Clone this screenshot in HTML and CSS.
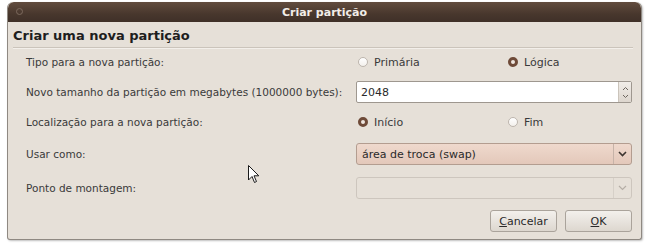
FILE: index.html
```html
<!DOCTYPE html>
<html lang="pt">
<head>
    <meta charset="UTF-8">
    <title>Criar partição</title>
    <link rel="stylesheet" href="styles.css">
</head>
<body>
    <div class="window">
        <div class="titlebar">
            <span class="close-dot"></span>
            <span class="title">Criar partição</span>
        </div>
        <div class="content">
            <h1>Criar uma nova partição</h1>

            <div class="row">
                <div class="label">Tipo para a nova partição:</div>
                <div class="radios">
                    <label class="radio"><span class="dot"></span>Primária</label>
                    <label class="radio"><span class="dot checked"></span>Lógica</label>
                </div>
            </div>

            <div class="row">
                <div class="label">Novo tamanho da partição em megabytes (1000000 bytes):</div>
                <div class="spin">
                    <span class="spin-value">2048</span>
                    <span class="spin-buttons">
                        <svg width="7" height="5" viewBox="0 0 7 5"><path d="M1 4 L3.5 1.5 L6 4" fill="none" stroke="#6d665f" stroke-width="1"/></svg>
                        <svg width="7" height="5" viewBox="0 0 7 5"><path d="M1 1 L3.5 3.5 L6 1" fill="none" stroke="#6d665f" stroke-width="1"/></svg>
                    </span>
                </div>
            </div>

            <div class="row">
                <div class="label">Localização para a nova partição:</div>
                <div class="radios">
                    <label class="radio"><span class="dot checked"></span>Início</label>
                    <label class="radio"><span class="dot"></span>Fim</label>
                </div>
            </div>

            <div class="row usage">
                <div class="label">Usar como:</div>
                <div class="combo active">
                    <span class="combo-value">área de troca (swap)</span>
                    <span class="combo-arrow">
                        <svg width="9" height="6" viewBox="0 0 9 6"><path d="M1 1 L4.5 4.5 L8 1" fill="none" stroke="#3d3530" stroke-width="1.6"/></svg>
                    </span>
                </div>
            </div>

            <div class="row mount">
                <div class="label">Ponto de montagem:</div>
                <div class="combo disabled">
                    <span class="combo-value"></span>
                    <span class="combo-arrow">
                        <svg width="9" height="6" viewBox="0 0 9 6"><path d="M1 1 L4.5 4.5 L8 1" fill="none" stroke="#b5aea6" stroke-width="1.2"/></svg>
                    </span>
                </div>
            </div>

            <div class="buttons">
                <button class="btn"><u>C</u>ancelar</button>
                <button class="btn"><u>O</u>K</button>
            </div>
        </div>
    </div>

    <svg class="cursor" width="12" height="19" viewBox="0 0 12 19">
        <path d="M0.5 0.5 L0.5 15 L4 11.5 L6.5 17.5 L8.5 16.5 L6 10.8 L10.8 10.8 Z" fill="#fff" stroke="#1a1a1a" stroke-width="1"/>
    </svg>
</body>
</html>
```

FILE: styles.css
```css
body {
    margin: 0;
    background: #fff;
    font-family: "DejaVu Sans", sans-serif;
    font-size: 11px;
    color: #3a3a3a;
    position: relative;
    width: 650px;
    height: 248px;
    overflow: hidden;
}

.window {
    margin: 2px 0 0 7px;
    width: 633px;
    height: 237px;
    border: 1px solid #8f8982;
    border-top: none;
    border-radius: 6px 6px 3px 3px;
    background: #e6e0d8;
    box-shadow: 1px 1px 2px rgba(0, 0, 0, 0.25);
    overflow: hidden;
}

.titlebar {
    height: 20px;
    background: linear-gradient(to bottom, #624c3e, #48372d 60%, #3f3028);
    display: flex;
    align-items: center;
    justify-content: center;
    position: relative;
    border-radius: 6px 6px 0 0;
}

.close-dot {
    position: absolute;
    left: 8px;
    top: 6px;
    width: 5px;
    height: 5px;
    border-radius: 50%;
    border: 1px solid #7d6a5f;
}

.title {
    color: #f2ede8;
    font-weight: bold;
    font-size: 11px;
}

.content {
    padding: 0 8px 0 5px;
}

h1 {
    margin: 0;
    font-size: 13px;
    font-weight: bold;
    color: #1e1e1e;
    height: 25px;
    line-height: 27px;
    border-bottom: 1px solid #cbc4bb;
    box-shadow: 0 1px 0 #f3efea;
}

.row {
    display: flex;
    height: 22px;
    margin-top: 8px;
}

.row:first-of-type {
    margin-top: 3px;
}

.row.usage {
    margin-top: 10px;
}

.row.mount {
    margin-top: 12px;
}

.label {
    width: 330px;
    padding-left: 13px;
    display: flex;
    align-items: center;
    font-size: 10.5px;
    white-space: nowrap;
}

.radios {
    width: 276px;
    display: grid;
    grid-template-columns: 150px 1fr;
    align-items: center;
}

.radio {
    display: flex;
    align-items: center;
    gap: 6px;
}

.dot {
    width: 8px;
    height: 8px;
    border-radius: 50%;
    border: 1px solid #bdb6ae;
    background: linear-gradient(to bottom, #fff, #f3f0ec);
    margin-left: 2px;
}

.dot.checked {
    width: 4px;
    height: 4px;
    border: 3px solid #6e4a38;
    background: #efe6df;
}

.spin {
    width: 274px;
    display: flex;
    background: #fff;
    border: 1px solid #9e978f;
    border-radius: 2px;
}

.spin-value {
    flex: 1;
    display: flex;
    align-items: center;
    padding-left: 4px;
    color: #2a2a2a;
}

.spin-buttons {
    width: 12px;
    display: flex;
    flex-direction: column;
    align-items: center;
    justify-content: center;
    gap: 3px;
    background: linear-gradient(to bottom, #f1ede8, #ddd6ce);
    border-left: 1px solid #cbc4bb;
}

.combo {
    width: 274px;
    display: flex;
    border: 1px solid #b6aa9f;
    border-radius: 3px;
}

.combo.active {
    background: linear-gradient(to bottom, #efd9cd, #e3c8ba);
    border-color: #b39d90;
}

.combo.disabled {
    background: #e6e0d8;
    border-color: #cdc6be;
}

.combo-value {
    flex: 1;
    display: flex;
    align-items: center;
    padding-left: 5px;
    color: #2a2a2a;
}

.combo-arrow {
    width: 17px;
    display: flex;
    align-items: center;
    justify-content: center;
    border-left: 1px solid #c6b3a8;
}

.combo.disabled .combo-arrow {
    border-left-color: #d6d0c8;
}

.buttons {
    display: flex;
    justify-content: flex-end;
    gap: 8px;
    margin-top: 11px;
    padding-right: 1px;
}

.btn {
    font-family: "DejaVu Sans", sans-serif;
    font-size: 11px;
    color: #2a2a2a;
    width: 67px;
    height: 22px;
    border: 1px solid #aaa39b;
    border-radius: 3px;
    background: linear-gradient(to bottom, #f3f0ec, #ddd7cf);
    padding: 0;
}

.cursor {
    position: absolute;
    left: 248px;
    top: 165px;
}
```
